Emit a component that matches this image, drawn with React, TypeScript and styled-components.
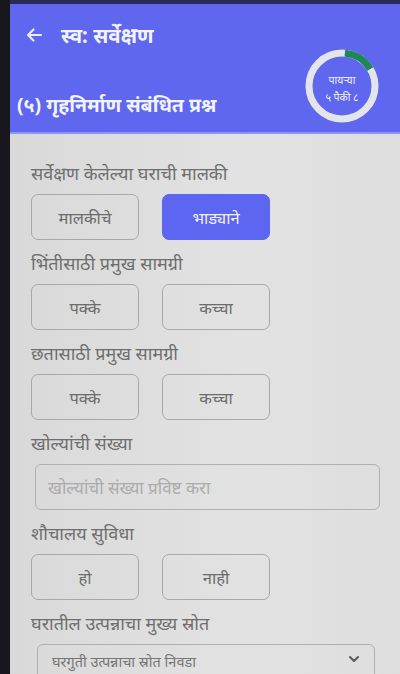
import React, { useState } from "react";
import styled, { createGlobalStyle } from "styled-components";

const GlobalStyle = createGlobalStyle`
  html, body {
    margin: 0;
    padding: 0;
    background: #16161c;
  }
  * {
    box-sizing: border-box;
  }
`;

const questions = [
  { key: "owner", label: "सर्वेक्षण केलेल्या घराची मालकी", options: ["मालकीचे", "भाड्याने"] },
  { key: "wall", label: "भिंतीसाठी प्रमुख सामग्री", options: ["पक्के", "कच्चा"] },
  { key: "roof", label: "छतासाठी प्रमुख सामग्री", options: ["पक्के", "कच्चा"] },
];

const ProgressRing = () => {
  const r = 33;
  const c = 2 * Math.PI * r;
  const arc = c * 0.15;
  return (
    <RingWrap>
      <svg width="76" height="76" viewBox="0 0 76 76">
        <circle cx="38" cy="38" r={r} fill="none" stroke="#e4e5ea" strokeWidth="7" />
        <circle
          cx="38"
          cy="38"
          r={r}
          fill="none"
          stroke="#1e8757"
          strokeWidth="7"
          strokeDasharray={`${arc} ${c}`}
          transform="rotate(-85 38 38)"
        />
      </svg>
      <RingText>
        <span>पायऱ्या</span>
        <span>५ पैकी ८</span>
      </RingText>
    </RingWrap>
  );
};

const App = () => {
  const [answers, setAnswers] = useState<Record<string, string>>({ owner: "भाड्याने" });

  const pick = (key: string, value: string) => setAnswers({ ...answers, [key]: value });

  return (
    <>
      <GlobalStyle />
      <Frame>
        <Bezel />
        <Screen>
          <TopEdge />
          <Header>
            <TitleRow>
              <BackArrow>
                <svg width="18" height="16" viewBox="0 0 18 16">
                  <path d="M16 8H3M8.5 2.5L3 8l5.5 5.5" fill="none" stroke="#e8eaff" strokeWidth="2.2" strokeLinecap="round" strokeLinejoin="round" />
                </svg>
              </BackArrow>
              <Title>स्व: सर्वेक्षण</Title>
            </TitleRow>
            <SectionRow>
              <SectionTitle>(५) गृहनिर्माण संबंधित प्रश्न</SectionTitle>
              <ProgressRing />
            </SectionRow>
          </Header>
          <Body>
            {questions.map((q) => (
              <Field key={q.key}>
                <Label>{q.label}</Label>
                <Choices>
                  {q.options.map((o) => (
                    <Choice key={o} $active={answers[q.key] === o} onClick={() => pick(q.key, o)}>
                      {o}
                    </Choice>
                  ))}
                </Choices>
              </Field>
            ))}
            <Field>
              <Label>खोल्यांची संख्या</Label>
              <TextInput placeholder="खोल्यांची संख्या प्रविष्ट करा" />
            </Field>
            <Field>
              <Label>शौचालय सुविधा</Label>
              <Choices>
                {["हो", "नाही"].map((o) => (
                  <Choice key={o} $active={answers.toilet === o} onClick={() => pick("toilet", o)}>
                    {o}
                  </Choice>
                ))}
              </Choices>
            </Field>
            <Field>
              <Label>घरातील उत्पन्नाचा मुख्य स्रोत</Label>
              <SelectBox>
                <SelectText>घरगुती उत्पन्नाचा स्रोत निवडा</SelectText>
                <Chevron>
                  <svg width="12" height="8" viewBox="0 0 12 8">
                    <path d="M2 2l4 4 4-4" fill="none" stroke="#5a5a5a" strokeWidth="2" strokeLinecap="round" strokeLinejoin="round" />
                  </svg>
                </Chevron>
              </SelectBox>
            </Field>
          </Body>
        </Screen>
      </Frame>
    </>
  );
};

export default App;

const font = `"Noto Sans", "Noto Sans Devanagari", "Lohit Devanagari", sans-serif`;

const Frame = styled.div`
  display: flex;
  width: 400px;
  height: 674px;
  overflow: hidden;
  font-family: ${font};
`;

const Bezel = styled.div`
  width: 10px;
  flex-shrink: 0;
  background: #17171d;
`;

const Screen = styled.div`
  flex: 1;
  display: flex;
  flex-direction: column;
  background: linear-gradient(90deg, #d9d9d9 0%, #e2e2e2 60%, #dedede 100%);
`;

const TopEdge = styled.div`
  height: 4px;
  flex-shrink: 0;
  background: #2a2c55;
`;

const Header = styled.div`
  flex-shrink: 0;
  background: #5e67ee;
  height: 130px;
  padding: 16px 20px 0 7px;
  border-bottom: 2px solid #8c94f6;
  color: #fff;
`;

const TitleRow = styled.div`
  display: flex;
  align-items: center;
  gap: 18px;
  height: 30px;
  padding-left: 8px;
`;

const BackArrow = styled.div`
  display: flex;
  align-items: center;
`;

const Title = styled.div`
  font-size: 20.5px;
  font-weight: 700;
  line-height: 30px;
  color: #f2f3ff;
`;

const SectionRow = styled.div`
  display: flex;
  align-items: flex-end;
  justify-content: space-between;
  margin-top: -2px;
`;

const SectionTitle = styled.div`
  font-size: 19.5px;
  font-weight: 700;
  line-height: 28px;
  color: #f2f3ff;
  padding-bottom: 5px;
`;

const RingWrap = styled.div`
  position: relative;
  width: 76px;
  height: 76px;
`;

const RingText = styled.div`
  position: absolute;
  inset: 0;
  padding-top: 6px;
  display: flex;
  flex-direction: column;
  align-items: center;
  justify-content: center;
  font-size: 10.5px;
  line-height: 17px;
  color: #eef0ff;
`;

const Body = styled.div`
  display: flex;
  flex-direction: column;
  gap: 12px;
  padding: 28px 20px 0 21px;
`;

const Field = styled.div`
  display: flex;
  flex-direction: column;
  gap: 10px;
`;

const Label = styled.div`
  font-size: 18px;
  color: #6e6e6e;
  line-height: 22px;
  white-space: nowrap;
`;

const Choices = styled.div`
  display: flex;
  gap: 23px;
`;

const Choice = styled.button<{ $active?: boolean }>`
  width: 108px;
  height: 46px;
  border-radius: 7px;
  border: 1.5px solid ${(p) => (p.$active ? "#5c66f0" : "#a8a8a8")};
  background: ${(p) => (p.$active ? "#5c66f0" : "transparent")};
  color: ${(p) => (p.$active ? "#eef0ff" : "#6c6c6c")};
  font-family: ${font};
  font-size: 16.5px;
  cursor: pointer;
`;

const TextInput = styled.input`
  height: 46px;
  width: 345px;
  margin-left: 4px;
  border: 1.5px solid #b0b0b0;
  border-radius: 6px;
  background: transparent;
  padding: 0 12px;
  font-family: ${font};
  font-size: 17px;
  color: #555;
  &::placeholder {
    color: #ababab;
  }
`;

const SelectBox = styled.div`
  height: 50px;
  width: 338px;
  margin-left: 6px;
  border: 1.5px solid #b0b0b0;
  border-radius: 6px;
  display: flex;
  align-items: flex-start;
  justify-content: space-between;
  padding: 4px 14px 0 14px;
`;

const SelectText = styled.span`
  font-size: 14.5px;
  line-height: 20px;
  color: #767676;
  padding-top: 2px;
`;

const Chevron = styled.span`
  display: flex;
  padding-top: 6px;
`;
